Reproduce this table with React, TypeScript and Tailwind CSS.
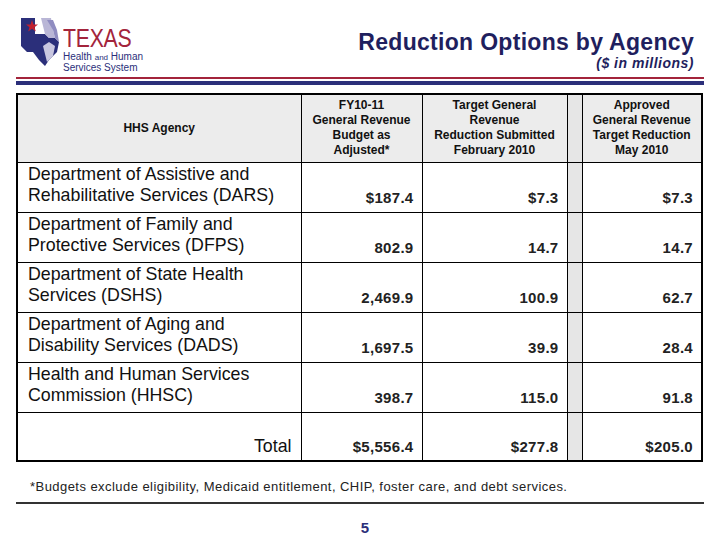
import React from "react";

const rows = [
  ["Department of Assistive and", "Rehabilitative Services (DARS)", "$187.4", "$7.3", "$7.3"],
  ["Department of Family and", "Protective Services (DFPS)", "802.9", "14.7", "14.7"],
  ["Department of State Health", "Services (DSHS)", "2,469.9", "100.9", "62.7"],
  ["Department of Aging and", "Disability Services (DADS)", "1,697.5", "39.9", "28.4"],
  ["Health and Human Services", "Commission (HHSC)", "398.7", "115.0", "91.8"],
];

function Logo() {
  return (
    <div className="flex items-start">
      <svg width="44" height="52" viewBox="0 0 44 52">
        <polygon points="2,2 16,2 16,18 26,18 30,22 36,22 40,26 38,36 30,44 26,50 20,44 14,36 8,36 2,30" fill="#2b2f7a" />
        <polygon points="22,2 32,2 34,14 36,22 30,22 26,18 24,10" fill="#b9b6d6" />
        <polygon points="28,4 34,4 38,14 40,26 36,22 34,14" fill="#8f8cc0" />
        <polygon points="24,30 30,26 36,30 34,40 28,46 26,38" fill="#c9c7e0" />
        <polygon points="13,4 14.5,8.5 19,8.5 15.5,11.2 16.8,15.5 13,12.8 9.2,15.5 10.5,11.2 7,8.5 11.5,8.5" fill="#c0202f" />
      </svg>
      <div className="flex flex-col" style={{ fontFamily: "'Liberation Sans', Arial, sans-serif" }}>
        <span className="mt-[8px] h-[28px] text-[25px] leading-[28px] text-[#a3243b] inline-block origin-left scale-x-[0.85] tracking-[-0.3px]">TEXAS</span>
        <span className="text-[10px] leading-[10px] text-[#2b2f7a]">Health <span className="text-[8px]">and</span> Human</span>
        <span className="text-[10px] leading-[10px] text-[#2b2f7a]">Services System</span>
      </div>
    </div>
  );
}

export default function App() {
  const cell = "border border-black";
  const num = `${cell} align-bottom text-right pr-[8px] pb-[2px] text-[15px] font-bold tracking-[0.3px] text-[#222]`;
  return (
    <div className="w-[720px] h-[540px] bg-white overflow-hidden" style={{ fontFamily: "'Liberation Sans', Arial, sans-serif" }}>
      <div className="h-[77px] flex justify-between pl-[19px] pr-[26px] pt-[16px]">
        <Logo />
        <div className="flex flex-col items-end pt-[13px]">
          <span className="text-[23px] leading-[26px] font-bold text-[#1f1f5e] tracking-[0.3px]">Reduction Options by Agency</span>
          <span className="text-[14px] leading-[16px] italic font-bold text-[#1f1f5e] tracking-[0.5px]">($ in millions)</span>
        </div>
      </div>
      <div className="mx-[16px] w-[688px]">
        <div className="h-[2px] bg-[#a3243b]" />
        <div className="h-[2px]" />
        <div className="h-[4px] bg-[#2b2f7a]" />
      </div>
      <table className="ml-[16px] mt-[8px] border-collapse border-[2px] border-black" style={{ tableLayout: "fixed", width: 685 }}>
        <colgroup>
          <col style={{ width: 284 }} />
          <col style={{ width: 121 }} />
          <col style={{ width: 145 }} />
          <col style={{ width: 15 }} />
          <col style={{ width: 120 }} />
        </colgroup>
        <thead>
          <tr className="h-[68px] bg-[#ececec] text-[#111]">
            <th className={`${cell} text-[12px] font-bold align-middle`}>HHS Agency</th>
            <th className={`${cell} text-[12px] leading-[15px] font-bold align-top pt-[3px]`}>FY10-11<br />General Revenue<br />Budget as<br />Adjusted*</th>
            <th className={`${cell} text-[12px] leading-[15px] font-bold align-top pt-[3px]`}>Target General<br />Revenue<br />Reduction Submitted<br />February 2010</th>
            <th className={`${cell} bg-[#e6e6e6]`}></th>
            <th className={`${cell} text-[12px] leading-[15px] font-bold align-top pt-[3px]`}>Approved<br />General Revenue<br />Target Reduction<br />May 2010</th>
          </tr>
        </thead>
        <tbody>
          {rows.map((r, i) => (
            <tr key={i} className="h-[50px]">
              <td className={`${cell} align-top pl-[10px] pt-[1px] text-[17.8px] leading-[21px] text-[#111]`}>{r[0]}<br />{r[1]}</td>
              <td className={num}>{r[2]}</td>
              <td className={num}>{r[3]}</td>
              <td className={`${cell} bg-[#e6e6e6]`}></td>
              <td className={num}>{r[4]}</td>
            </tr>
          ))}
          <tr className="h-[49px]">
            <td className={`${cell} align-bottom text-right pr-[9px] pb-[0px] text-[17.8px] text-[#111]`}>Total</td>
            <td className={num}>$5,556.4</td>
            <td className={num}>$277.8</td>
            <td className={`${cell} bg-[#e6e6e6]`}></td>
            <td className={num}>$205.0</td>
          </tr>
        </tbody>
      </table>
      <div className="ml-[30px] mt-[17px] text-[13px] leading-[16px] tracking-[0.45px] text-[#222]">
        *Budgets exclude eligibility, Medicaid entitlement, CHIP, foster care, and debt services.
      </div>
      <div className="ml-[16px] mt-[7px] w-[688px] h-[2px] bg-[#333]" />
      <div className="mt-[15px] text-center pl-[10px] text-[15px] leading-[18px] font-bold text-[#2b2f7a]">5</div>
    </div>
  );
}
